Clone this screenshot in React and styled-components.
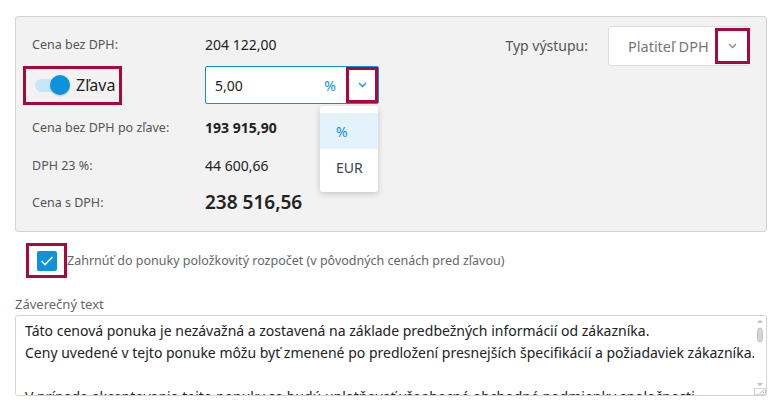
import React from 'react';
import styled, { createGlobalStyle } from 'styled-components';

const GlobalStyle = createGlobalStyle`
  html, body { margin: 0; padding: 0; background: #fff; }
  body { font-family: "Noto Sans", "Open Sans", sans-serif; color: #333; }
  * { box-sizing: border-box; }
`;

const RED = '#a8093a';
const BLUE = '#0d93dc';

const Page = styled.div`
  width: 782px;
  height: 407px;
  padding: 16px 15px 0 15px;
  overflow: hidden;
`;

const Panel = styled.div`
  display: flex;
  justify-content: space-between;
  background: #f2f2f2;
  border: 1px solid #d4d4d4;
  border-radius: 3px;
  height: 216px;
  padding: 8px 16px 0 16px;
`;

const Rows = styled.div`
  display: flex;
  flex-direction: column;
`;

const Row = styled.div`
  display: grid;
  grid-template-columns: 173px auto;
  align-items: center;
  height: ${p => p.h}px;
`;

const Label = styled.span`
  font-size: 12.5px;
  color: #555;
`;

const Value = styled.span`
  font-size: ${p => p.size || 14}px;
  font-weight: ${p => p.weight || 400};
  color: #222;
`;

const Marked = styled.div`
  border: 3px solid ${RED};
  display: flex;
  align-items: center;
  justify-content: center;
`;

const ToggleBox = styled(Marked)`
  width: 99px;
  height: 39px;
  margin-left: -9px;
  justify-content: flex-start;
  padding-left: 9px;
  gap: 6px;
`;

const Toggle = styled.span`
  position: relative;
  width: 35px;
  height: 20px;
  display: inline-block;
  &::before {
    content: '';
    position: absolute;
    left: 0;
    top: 4px;
    width: 28px;
    height: 13px;
    border-radius: 7px;
    background: #c6e5f8;
  }
  &::after {
    content: '';
    position: absolute;
    right: 0;
    top: 0;
    width: 20px;
    height: 20px;
    border-radius: 50%;
    background: ${BLUE};
    box-shadow: 0 1px 2px rgba(0,0,0,0.2);
  }
`;

const ToggleText = styled.span`
  font-size: 16px;
  color: #222;
`;

const InputWrap = styled.div`
  position: relative;
  width: 174px;
`;

const Input = styled.div`
  display: flex;
  align-items: center;
  height: 38px;
  border: 1px solid ${BLUE};
  border-radius: 2px;
  background: #fff;
  padding-left: 9px;
`;

const InputText = styled.span`
  flex: 1;
  font-size: 14px;
  color: #222;
`;

const Unit = styled.span`
  font-size: 14px;
  color: ${BLUE};
  margin-right: 10px;
`;

const ChevronBox = styled(Marked)`
  width: ${p => p.w}px;
  height: ${p => p.hh}px;
  margin-right: ${p => p.mr || 0}px;
`;

const Menu = styled.div`
  position: absolute;
  top: 40px;
  right: 1px;
  width: 58px;
  background: #fff;
  border-radius: 3px;
  box-shadow: 0 2px 6px rgba(0,0,0,0.18);
  padding: 7px 0;
  z-index: 2;
`;

const MenuItem = styled.div`
  height: 36px;
  display: flex;
  align-items: center;
  padding-left: 16px;
  font-size: 14px;
  color: ${p => (p.active ? BLUE : '#444')};
  background: ${p => (p.active ? '#e4f2fb' : 'transparent')};
`;

const Output = styled.div`
  display: flex;
  align-items: flex-start;
  gap: 20px;
`;

const OutputLabel = styled.span`
  font-size: 14px;
  color: #555;
  margin-top: 11px;
`;

const Select = styled.div`
  width: 142px;
  height: 40px;
  margin-top: 1px;
  background: #fff;
  border: 1px solid #dcdcdc;
  border-radius: 3px;
  display: flex;
  align-items: center;
  justify-content: space-between;
  padding-left: 19px;
`;

const SelectText = styled.span`
  font-size: 14.5px;
  color: #777;
`;

const CheckRow = styled.div`
  display: flex;
  align-items: center;
  margin: 11px 0 0 11px;
`;

const CheckBox = styled(Marked)`
  width: 41px;
  height: 35px;
`;

const Check = styled.span`
  width: 20px;
  height: 20px;
  border-radius: 2px;
  background: ${BLUE};
  display: flex;
  align-items: center;
  justify-content: center;
`;

const CheckText = styled.span`
  font-size: 12.5px;
  color: #666;
`;

const FieldLabel = styled.div`
  font-size: 13px;
  color: #666;
  margin-top: 17px;
  line-height: 18px;
`;

const TextBox = styled.div`
  position: relative;
  width: 752px;
  margin-top: 2px;
`;

const TextArea = styled.textarea`
  display: block;
  width: 100%;
  height: 81px;
  border: 1px solid #d4d4d4;
  border-radius: 3px;
  padding: 4px 10px 4px 9px;
  font-family: "Noto Sans", "Open Sans", sans-serif;
  font-size: 14px;
  line-height: 22px;
  color: #222;
  resize: none;
  overflow: hidden;
  outline: none;
  scrollbar-width: none;
`;

const ScrollBar = styled.div`
  position: absolute;
  top: 1px;
  right: 1px;
  bottom: 1px;
  width: 12px;
  background: #fff;
  pointer-events: none;
`;

const ScrollDrawing = () => (
  <svg width="12" height="79" viewBox="0 0 12 79">
    <path d="M3 7h6L6 3.5z" fill="#c4c4c4" />
    <rect x="3.5" y="12" width="5" height="14" rx="2.5" fill="#d4d4d4" stroke="#c2c2c2" strokeWidth="0.8" />
    <path d="M3 67h6L6 70.5z" fill="#c4c4c4" />
    <rect x="0.5" y="72.5" width="11" height="6" fill="#fff" stroke="#d6d6d6" strokeWidth="1" />
    <path d="M6 77.5l4-4M8.5 77.5l1.5-1.5" stroke="#999" strokeWidth="0.8" />
  </svg>
);

const Chevron = ({ color }) => (
  <svg width="9" height="6" viewBox="0 0 9 6">
    <path d="M1 1l3.5 3.5L8 1" fill="none" stroke={color} strokeWidth="1.3" />
  </svg>
);

const closing = `Táto cenová ponuka je nezávažná a zostavená na základe predbežných informácií od zákazníka.
Ceny uvedené v tejto ponuke môžu byť zmenené po predložení presnejších špecifikácií a požiadaviek zákazníka.

V prípade akceptovania tejto ponuky sa budú uplatňovať všeobecné obchodné podmienky spoločnosti Stavebníček.
Platnosť ponuky je 30 dní od jej vystavenia.`;

export default function App() {
  return (
    <Page>
      <GlobalStyle />
      <Panel>
        <Rows>
          <Row h={38}>
            <Label>Cena bez DPH:</Label>
            <Value>204 122,00</Value>
          </Row>
          <Row h={44}>
            <ToggleBox>
              <Toggle />
              <ToggleText>Zľava</ToggleText>
            </ToggleBox>
            <InputWrap>
              <Input>
                <InputText>5,00</InputText>
                <Unit>%</Unit>
                <ChevronBox w={32} hh={36}>
                  <Chevron color={BLUE} />
                </ChevronBox>
              </Input>
              <Menu>
                <MenuItem active>%</MenuItem>
                <MenuItem>EUR</MenuItem>
              </Menu>
            </InputWrap>
          </Row>
          <Row h={41}>
            <Label>Cena bez DPH po zľave:</Label>
            <Value weight={700}>193 915,90</Value>
          </Row>
          <Row h={35}>
            <Label>DPH 23 %:</Label>
            <Value>44 600,66</Value>
          </Row>
          <Row h={38}>
            <Label>Cena s DPH:</Label>
            <Value size={19} weight={600}>238 516,56</Value>
          </Row>
        </Rows>
        <Output>
          <OutputLabel>Typ výstupu:</OutputLabel>
          <Select>
            <SelectText>Platiteľ DPH</SelectText>
            <ChevronBox w={35} hh={36} mr={-1}>
              <Chevron color="#888" />
            </ChevronBox>
          </Select>
        </Output>
      </Panel>
      <CheckRow>
        <CheckBox>
          <Check>
            <svg width="14" height="10" viewBox="0 0 14 10">
              <path d="M1.5 5l3.5 3.5L12.5 1" fill="none" stroke="#fff" strokeWidth="1.6" />
            </svg>
          </Check>
        </CheckBox>
        <CheckText>Zahrnúť do ponuky položkovitý rozpočet (v pôvodných cenách pred zľavou)</CheckText>
      </CheckRow>
      <FieldLabel>Záverečný text</FieldLabel>
      <TextBox>
        <TextArea defaultValue={closing} />
        <ScrollBar>
          <ScrollDrawing />
        </ScrollBar>
      </TextBox>
    </Page>
  );
}
